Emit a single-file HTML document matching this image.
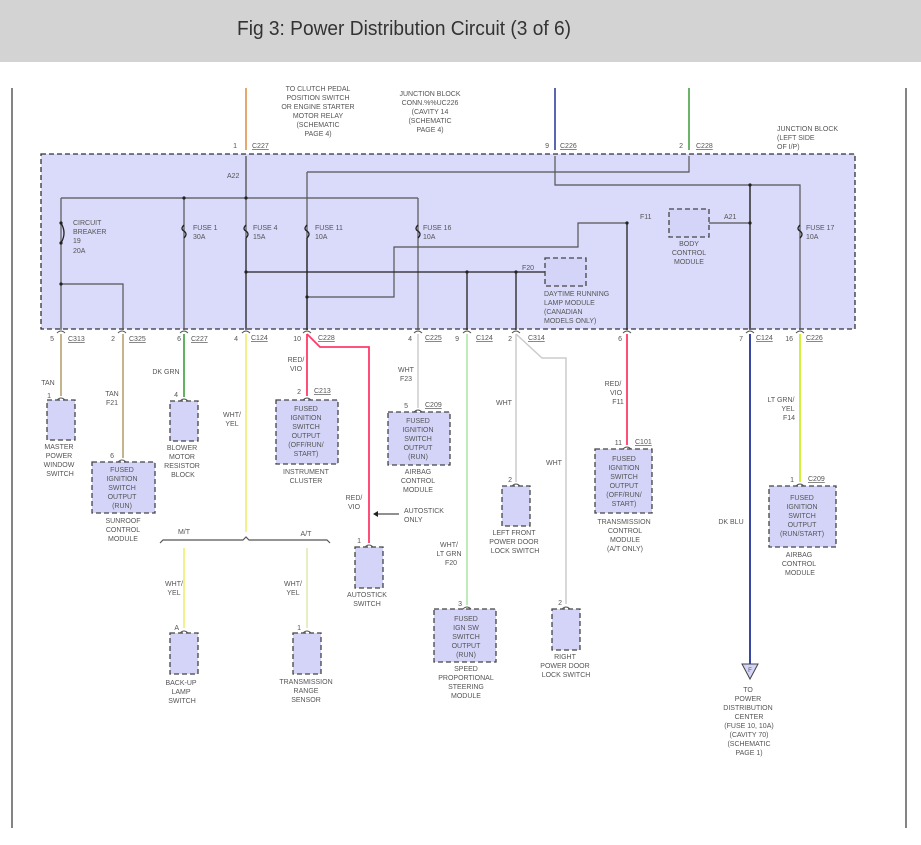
<!DOCTYPE html>
<html><head><meta charset="utf-8">
<style>
html,body{margin:0;padding:0;background:#fff;}
svg{display:block}
text{font-family:"Liberation Sans",sans-serif;font-size:7px;fill:#555;}
.m{text-anchor:middle}
.e{text-anchor:end}
.u{text-decoration:underline}
.w{fill:none;stroke:#555;stroke-width:1.2}
.k{fill:none;stroke:#222;stroke-width:1.3}
.box{fill:#d4d4f8;stroke:#444;stroke-width:1.3;stroke-dasharray:5,3}
.c{fill:none;stroke:#555;stroke-width:1}
.d{fill:#222}
</style></head><body>
<svg width="921" height="845" viewBox="0 0 921 845" xmlns="http://www.w3.org/2000/svg">
<rect x="0" y="0" width="921" height="62" fill="#d3d3d3"/>
<text x="237" y="35" textLength="334" lengthAdjust="spacingAndGlyphs" style="font-size:20px;fill:#333">Fig 3: Power Distribution Circuit (3 of 6)</text>
<line x1="12" y1="88" x2="12" y2="828" stroke="#333" stroke-width="1.2"/>
<line x1="906" y1="88" x2="906" y2="828" stroke="#333" stroke-width="1.2"/>

<!-- junction block -->
<rect x="41" y="154" width="814" height="175" fill="#dadafa" stroke="#333" stroke-width="1.3" stroke-dasharray="5,3"/>

<!-- top wires -->
<line x1="246" y1="88" x2="246" y2="150" stroke="#e08a3c" stroke-width="1.5"/>
<line x1="555" y1="88" x2="555" y2="150" stroke="#223399" stroke-width="1.5"/>
<line x1="689" y1="88" x2="689" y2="150" stroke="#3a9a3a" stroke-width="1.5"/>
<text x="237" y="148" class="e">1</text><text x="252" y="148" class="u">C227</text>
<text x="549" y="148" class="e">9</text><text x="560" y="148" class="u">C226</text>
<text x="683" y="148" class="e">2</text><text x="696" y="148" class="u">C228</text>
<text x="318" y="91" class="m">TO CLUTCH PEDAL<tspan x="318" dy="9">POSITION SWITCH</tspan><tspan x="318" dy="9">OR ENGINE STARTER</tspan><tspan x="318" dy="9">MOTOR RELAY</tspan><tspan x="318" dy="9">(SCHEMATIC</tspan><tspan x="318" dy="9">PAGE 4)</tspan></text>
<text x="430" y="96" class="m">JUNCTION BLOCK<tspan x="430" dy="9">CONN.%%UC226</tspan><tspan x="430" dy="9">(CAVITY 14</tspan><tspan x="430" dy="9">(SCHEMATIC</tspan><tspan x="430" dy="9">PAGE 4)</tspan></text>
<text x="777" y="131">JUNCTION BLOCK<tspan x="777" dy="9">(LEFT SIDE</tspan><tspan x="777" dy="9">OF I/P)</tspan></text>

<!-- internal wiring -->
<path class="w" d="M246 156 V198 M61 198 H418 M61 198 V330 M61 284 H123 V330 M184 198 V330 M418 198 V330"/>
<path class="w" d="M307 172 H689 V156 M307 172 V330 M307 297 H394 V247 H578 V223 H627"/>
<path class="w" d="M555 156 V185 H800 V330 M750 185 V330 M709 223 H750"/>
<path class="k" d="M246 238 V330 M246 272 H578 M516 272 V330 M467 272 V330 M307 238 V330 M627 223 V330 M750 185 V330"/>
<path class="w" d="M246 156 V238"/>
<!-- fuse symbols -->
<path class="k" d="M61 223 q6 10 0 20" /><circle class="d" cx="61" cy="223" r="1.6"/><circle class="d" cx="61" cy="243" r="1.6"/>
<g class="k"><path d="M184 225 q-4 4 0 6 q4 3 0 7"/><path d="M246 225 q-4 4 0 6 q4 3 0 7"/><path d="M307 225 q-4 4 0 6 q4 3 0 7"/><path d="M418 225 q-4 4 0 6 q4 3 0 7"/><path d="M800 225 q-4 4 0 6 q4 3 0 7"/></g>
<g class="d"><circle cx="184" cy="198" r="1.6"/><circle cx="246" cy="198" r="1.6"/><circle cx="61" cy="284" r="1.6"/><circle cx="246" cy="272" r="1.6"/><circle cx="307" cy="297" r="1.6"/><circle cx="467" cy="272" r="1.6"/><circle cx="516" cy="272" r="1.6"/><circle cx="627" cy="223" r="1.6"/><circle cx="750" cy="223" r="1.6"/><circle cx="750" cy="185" r="1.6"/></g>
<text x="73" y="225">CIRCUIT<tspan x="73" dy="9">BREAKER</tspan><tspan x="73" dy="9">19</tspan><tspan x="73" dy="10">20A</tspan></text>
<text x="193" y="230">FUSE 1<tspan x="193" dy="9">30A</tspan></text>
<text x="253" y="230">FUSE 4<tspan x="253" dy="9">15A</tspan></text>
<text x="315" y="230">FUSE 11<tspan x="315" dy="9">10A</tspan></text>
<text x="423" y="230">FUSE 16<tspan x="423" dy="9">10A</tspan></text>
<text x="806" y="230">FUSE 17<tspan x="806" dy="9">10A</tspan></text>
<text x="227" y="178">A22</text>
<text x="640" y="219">F11</text><text x="724" y="219">A21</text><text x="522" y="270">F20</text>
<rect class="box" x="669" y="209" width="40" height="28"/>
<text x="689" y="246" class="m">BODY<tspan x="689" dy="9">CONTROL</tspan><tspan x="689" dy="9">MODULE</tspan></text>
<rect class="box" x="545" y="258" width="41" height="28"/>
<text x="544" y="296">DAYTIME RUNNING<tspan x="544" dy="9">LAMP MODULE</tspan><tspan x="544" dy="9">(CANADIAN</tspan><tspan x="544" dy="9">MODELS ONLY)</tspan></text>

<!-- bottom connectors labels -->
<g>
<text x="54" y="341" class="e">5</text><text x="68" y="341" class="u">C313</text>
<text x="115" y="341" class="e">2</text><text x="129" y="341" class="u">C325</text>
<text x="181" y="341" class="e">6</text><text x="191" y="341" class="u">C227</text>
<text x="238" y="341" class="e">4</text><text x="251" y="340" class="u">C124</text>
<text x="301" y="341" class="e">10</text><text x="318" y="340" class="u">C228</text>
<text x="412" y="341" class="e">4</text><text x="425" y="340" class="u">C225</text>
<text x="459" y="341" class="e">9</text><text x="476" y="340" class="u">C124</text>
<text x="512" y="341" class="e">2</text><text x="528" y="340" class="u">C314</text>
<text x="622" y="341" class="e">6</text>
<text x="743" y="341" class="e">7</text><text x="756" y="340" class="u">C124</text>
<text x="793" y="341" class="e">16</text><text x="806" y="340" class="u">C226</text>
</g>
<g class="c">
<path d="M57 333 q4 -4 8 0 M118 333 q4 -4 8 0 M180 333 q4 -4 8 0 M242 333 q4 -4 8 0 M303 333 q4 -4 8 0 M414 333 q4 -4 8 0 M463 333 q4 -4 8 0 M512 333 q4 -4 8 0 M623 333 q4 -4 8 0 M746 333 q4 -4 8 0 M796 333 q4 -4 8 0"/>
</g>

<!-- outgoing wires -->
<line x1="61" y1="334" x2="61" y2="396" stroke="#b09a64" stroke-width="1.5"/>
<line x1="123" y1="334" x2="123" y2="458" stroke="#b09a64" stroke-width="1.5"/>
<line x1="184" y1="334" x2="184" y2="397" stroke="#2a9a2a" stroke-width="1.5"/>
<line x1="246" y1="334" x2="246" y2="532" stroke="#eeee66" stroke-width="1.5"/>
<path d="M307 334 V396 M307 334 L320 347 H369 V514" stroke="#ff3a6a" stroke-width="1.8" fill="none"/>
<path d="M369 514 V543" stroke="#ff3a6a" stroke-width="1.8"/>
<line x1="418" y1="334" x2="418" y2="408" stroke="#ccc" stroke-width="1.5"/>
<line x1="467" y1="334" x2="467" y2="605" stroke="#a8e6a0" stroke-width="1.5"/>
<line x1="516" y1="334" x2="516" y2="482" stroke="#ccc" stroke-width="1.5"/>
<path d="M516 334 L542 358 H566 V604" stroke="#ccc" stroke-width="1.5" fill="none"/>
<line x1="627" y1="334" x2="627" y2="445" stroke="#ff3a6a" stroke-width="1.8"/>
<line x1="750" y1="334" x2="750" y2="664" stroke="#223399" stroke-width="1.8"/>
<line x1="800" y1="334" x2="800" y2="482" stroke="#ccee22" stroke-width="1.8"/>
<line x1="184" y1="548" x2="184" y2="628" stroke="#eeee66" stroke-width="1.5"/>
<line x1="307" y1="548" x2="307" y2="628" stroke="#dde8b0" stroke-width="1.5"/>
<path class="w" d="M160 543 l3 -3 H243 l3 -3 l3 3 H327 l3 3"/>
<path d="M399 514 H376" stroke="#222" stroke-width="1"/><path d="M373 514 l5 -3 v6 z" fill="#222"/>

<!-- wire labels -->
<text x="48" y="385" class="m">TAN</text>
<text x="112" y="396" class="m">TAN<tspan x="112" dy="9">F21</tspan></text>
<text x="166" y="374" class="m">DK GRN</text>
<text x="232" y="417" class="m">WHT/<tspan x="232" dy="9">YEL</tspan></text>
<text x="296" y="362" class="m">RED/<tspan x="296" dy="9">VIO</tspan></text>
<text x="406" y="372" class="m">WHT<tspan x="406" dy="9">F23</tspan></text>
<text x="354" y="500" class="m">RED/<tspan x="354" dy="9">VIO</tspan></text>
<text x="404" y="513">AUTOSTICK<tspan x="404" dy="9">ONLY</tspan></text>
<text x="184" y="534" class="m">M/T</text><text x="306" y="536" class="m">A/T</text>
<text x="174" y="586" class="m">WHT/<tspan x="174" dy="9">YEL</tspan></text>
<text x="293" y="586" class="m">WHT/<tspan x="293" dy="9">YEL</tspan></text>
<text x="449" y="547" class="m">WHT/<tspan x="449" dy="9">LT GRN</tspan><tspan x="451" dy="9">F20</tspan></text>
<text x="504" y="405" class="m">WHT</text>
<text x="554" y="465" class="m">WHT</text>
<text x="613" y="386" class="m">RED/<tspan x="616" dy="9">VIO</tspan><tspan x="618" dy="9">F11</tspan></text>
<text x="731" y="524" class="m">DK BLU</text>
<text x="781" y="402" class="m">LT GRN/<tspan x="788" dy="9">YEL</tspan><tspan x="789" dy="9">F14</tspan></text>

<!-- modules -->
<g>
<rect class="box" x="47" y="400" width="28" height="40"/><text x="51" y="398" class="e">1</text><path class="c" d="M57 400 q4 -4 8 0"/>
<text x="59" y="449" class="m">MASTER<tspan x="59" dy="9">POWER</tspan><tspan x="59" dy="9">WINDOW</tspan><tspan x="60" dy="9">SWITCH</tspan></text>

<rect class="box" x="92" y="462" width="63" height="51"/><text x="114" y="458" class="e">6</text><path class="c" d="M118 462 q4 -4 8 0"/>
<text x="122" y="472" class="m">FUSED<tspan x="122" dy="9">IGNITION</tspan><tspan x="122" dy="9">SWITCH</tspan><tspan x="122" dy="9">OUTPUT</tspan><tspan x="122" dy="9">(RUN)</tspan></text>
<text x="123" y="523" class="m">SUNROOF<tspan x="123" dy="9">CONTROL</tspan><tspan x="123" dy="9">MODULE</tspan></text>

<rect class="box" x="170" y="401" width="28" height="40"/><text x="178" y="397" class="e">4</text><path class="c" d="M180 401 q4 -4 8 0"/>
<text x="182" y="450" class="m">BLOWER<tspan x="182" dy="9">MOTOR</tspan><tspan x="182" dy="9">RESISTOR</tspan><tspan x="183" dy="9">BLOCK</tspan></text>

<rect class="box" x="276" y="400" width="62" height="64"/><text x="301" y="394" class="e">2</text><text x="314" y="393" class="u">C213</text><path class="c" d="M303 400 q4 -4 8 0"/>
<text x="306" y="411" class="m">FUSED<tspan x="306" dy="9">IGNITION</tspan><tspan x="306" dy="9">SWITCH</tspan><tspan x="306" dy="9">OUTPUT</tspan><tspan x="306" dy="9">(OFF/RUN/</tspan><tspan x="306" dy="9">START)</tspan></text>
<text x="306" y="474" class="m">INSTRUMENT<tspan x="306" dy="9">CLUSTER</tspan></text>

<rect class="box" x="388" y="412" width="62" height="53"/><text x="408" y="408" class="e">5</text><text x="425" y="407" class="u">C209</text><path class="c" d="M414 412 q4 -4 8 0"/>
<text x="418" y="423" class="m">FUSED<tspan x="418" dy="9">IGNITION</tspan><tspan x="418" dy="9">SWITCH</tspan><tspan x="418" dy="9">OUTPUT</tspan><tspan x="418" dy="9">(RUN)</tspan></text>
<text x="418" y="474" class="m">AIRBAG<tspan x="418" dy="9">CONTROL</tspan><tspan x="418" dy="9">MODULE</tspan></text>

<rect class="box" x="355" y="547" width="28" height="41"/><text x="361" y="543" class="e">1</text><path class="c" d="M365 547 q4 -4 8 0"/>
<text x="367" y="597" class="m">AUTOSTICK<tspan x="367" dy="9">SWITCH</tspan></text>

<rect class="box" x="170" y="633" width="28" height="41"/><text x="179" y="630" class="e">A</text><path class="c" d="M180 633 q4 -4 8 0"/>
<text x="181" y="685" class="m">BACK-UP<tspan x="181" dy="9">LAMP</tspan><tspan x="182" dy="9">SWITCH</tspan></text>

<rect class="box" x="293" y="633" width="28" height="41"/><text x="301" y="630" class="e">1</text><path class="c" d="M303 633 q4 -4 8 0"/>
<text x="306" y="684" class="m">TRANSMISSION<tspan x="306" dy="9">RANGE</tspan><tspan x="306" dy="9">SENSOR</tspan></text>

<rect class="box" x="434" y="609" width="62" height="53"/><text x="462" y="606" class="e">3</text><path class="c" d="M463 609 q4 -4 8 0"/>
<text x="466" y="621" class="m">FUSED<tspan x="466" dy="9">IGN SW</tspan><tspan x="466" dy="9">SWITCH</tspan><tspan x="466" dy="9">OUTPUT</tspan><tspan x="466" dy="9">(RUN)</tspan></text>
<text x="466" y="671" class="m">SPEED<tspan x="466" dy="9">PROPORTIONAL</tspan><tspan x="466" dy="9">STEERING</tspan><tspan x="466" dy="9">MODULE</tspan></text>

<rect class="box" x="502" y="486" width="28" height="40"/><text x="512" y="482" class="e">2</text><path class="c" d="M512 486 q4 -4 8 0"/>
<text x="514" y="535" class="m">LEFT FRONT<tspan x="514" dy="9">POWER DOOR</tspan><tspan x="515" dy="9">LOCK SWITCH</tspan></text>

<rect class="box" x="552" y="609" width="28" height="41"/><text x="562" y="605" class="e">2</text><path class="c" d="M562 609 q4 -4 8 0"/>
<text x="565" y="659" class="m">RIGHT<tspan x="565" dy="9">POWER DOOR</tspan><tspan x="566" dy="9">LOCK SWITCH</tspan></text>

<rect class="box" x="595" y="449" width="57" height="64"/><text x="622" y="445" class="e">11</text><text x="635" y="444" class="u">C101</text><path class="c" d="M623 449 q4 -4 8 0"/>
<text x="624" y="461" class="m">FUSED<tspan x="624" dy="9">IGNITION</tspan><tspan x="624" dy="9">SWITCH</tspan><tspan x="624" dy="9">OUTPUT</tspan><tspan x="624" dy="9">(OFF/RUN/</tspan><tspan x="624" dy="9">START)</tspan></text>
<text x="624" y="524" class="m">TRANSMISSION<tspan x="625" dy="9">CONTROL</tspan><tspan x="625" dy="9">MODULE</tspan><tspan x="625" dy="9">(A/T ONLY)</tspan></text>

<rect class="box" x="769" y="486" width="67" height="61"/><text x="794" y="482" class="e">1</text><text x="808" y="481" class="u">C209</text><path class="c" d="M796 486 q4 -4 8 0"/>
<text x="802" y="500" class="m">FUSED<tspan x="802" dy="9">IGNITION</tspan><tspan x="802" dy="9">SWITCH</tspan><tspan x="802" dy="9">OUTPUT</tspan><tspan x="802" dy="9">(RUN/START)</tspan></text>
<text x="799" y="557" class="m">AIRBAG<tspan x="799" dy="9">CONTROL</tspan><tspan x="800" dy="9">MODULE</tspan></text>

<path d="M742 664 H758 L750 679 Z" fill="#d4d4f8" stroke="#444" stroke-width="1"/><text x="750" y="672" class="m" style="font-size:6px">F</text>
<text x="748" y="692" class="m">TO<tspan x="748" dy="9">POWER</tspan><tspan x="748" dy="9">DISTRIBUTION</tspan><tspan x="749" dy="9">CENTER</tspan><tspan x="749" dy="9">(FUSE 10, 10A)</tspan><tspan x="749" dy="9">(CAVITY 70)</tspan><tspan x="749" dy="9">(SCHEMATIC</tspan><tspan x="749" dy="9">PAGE 1)</tspan></text>
</g>
</svg>
</body></html>
